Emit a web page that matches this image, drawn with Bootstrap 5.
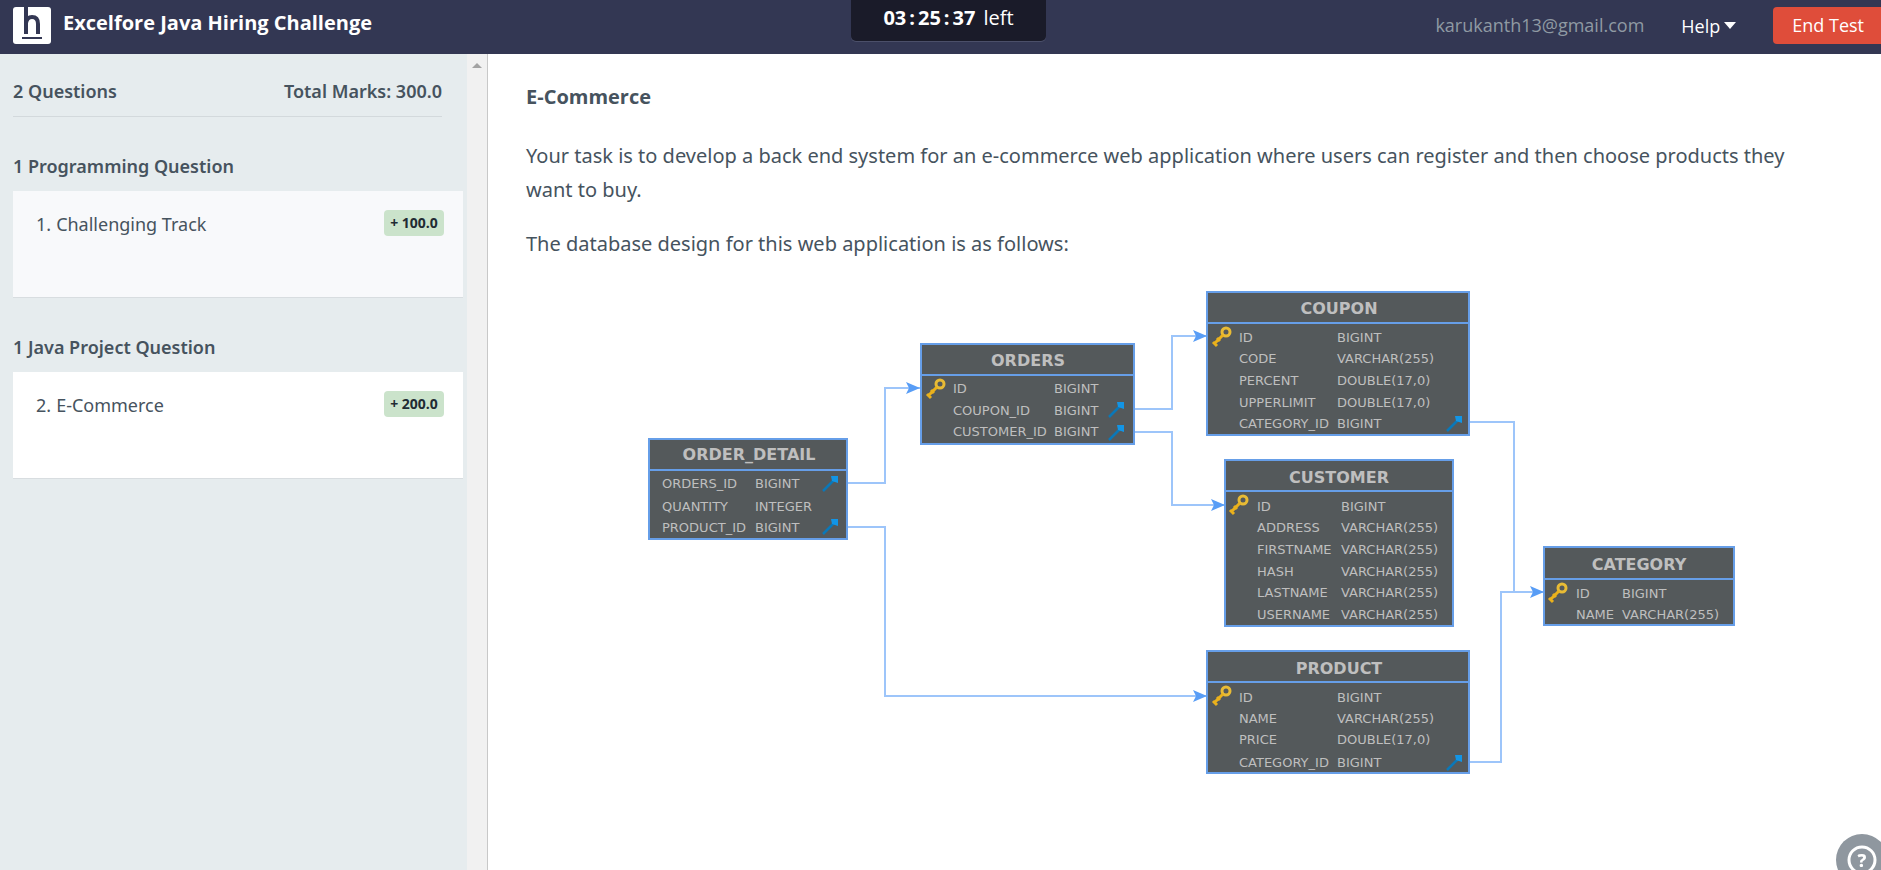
<!DOCTYPE html>
<html lang="en">
<head>
<meta charset="utf-8">
<meta name="viewport" content="width=device-width, initial-scale=1">
<title>Excelfore Java Hiring Challenge</title>
<link href="https://cdn.jsdelivr.net/npm/bootstrap@5.3.0/dist/css/bootstrap.min.css" rel="stylesheet">
<style>
  body { font-family: "Noto Sans", "Open Sans", sans-serif; color: #46535e; font-size: 18px; }
  .topbar { background: #333753; height: 54px; padding: 7px 0 0 13px; font-family: "Open Sans", sans-serif; }
  .brand-title { font-size: 20px; line-height: 32px; font-weight: 700; }
  .timer { background: #1a1b29; color: #fff; top: 0; left: 851px; width: 195px; height: 41px; line-height: 36px; font-size: 20px; border-radius: 0 0 5px 5px; box-shadow: 0 1px 0 #4b4f69; }
  .timer time { font-weight: 700; }
  .timer-sep { margin: 0 3px; }
  .mail { color: #8f9aa3; margin-right: 37px; line-height: 36px; }
  .help-link { color: #fff; font-size: 18px; line-height: 36px; font-weight: 400; margin-right: 37px; }
  .end-btn { background: #df4d3a; color: #fff; font-size: 18px; line-height: 37px; padding: 0 17px 0 19px; border: 0; border-radius: 4px 0 0 4px; }
  .side { width: 488px; background: #e6ecee; border-right: 1px solid #c8c8c8; }
  .side-body { padding: 24px 4px 0 13px; }
  .side-head { margin-right: 21px; padding-bottom: 11px; line-height: 27px; border-bottom: 1px solid #d3d9dc; font-weight: 600; }
  .group-title { font-size: 18px; line-height: 27px; font-weight: 600; margin: 36px 0 11px; }
  .q-item { height: 107px; padding: 19px 19px 0 23px; background: #fff; border-bottom: 1px solid #d8dde0; color: inherit; line-height: 29px; text-decoration: none; }
  .q-item.seen { background: #f8f9fb; }
  .q-no { margin-right: 5px; }
  .marks { background: #cbe3cb; color: #222b33; font-size: 14px; line-height: 26px; font-weight: 700; width: 60px; border-radius: 4px; font-family: "Open Sans", sans-serif; }
  .track { width: 20px; background: #f1f1f1; padding-top: 9px; }
  .problem { padding: 28px 24px 24px 38px; }
  .problem h1 { font-size: 20px; line-height: 30px; font-weight: 700; margin-bottom: 27px; font-family: "Open Sans", sans-serif; }
  .problem p { font-size: 20px; line-height: 34px; margin-bottom: 20px; padding-right: 44px; }
  .schema { max-width: 100%; height: auto; margin-top: 29px; }
  .schema text { font-family: "DejaVu Sans", sans-serif; font-size: 13px; fill: #bfbfbf; }
  .schema .t-name { font-weight: 700; font-size: 16px; text-anchor: middle; }
  .chat { right: -7px; bottom: -16px; width: 52px; height: 52px; }
</style>
</head>
<body class="vh-100 overflow-hidden d-flex flex-column">
<header class="topbar d-flex align-items-start position-relative flex-shrink-0">
  <svg width="38" height="37" viewBox="0 0 38 37" aria-label="HackerEarth" role="img">
    <rect width="38" height="37" rx="3" fill="#fff"/>
    <path d="M13 0V27M13 16Q14 10 19 10Q25 10 25 17V27" fill="none" stroke="#333753" stroke-width="4"/>
    <path d="M9 31H29" stroke="#333753" stroke-width="2"/>
  </svg>
  <span class="brand-title text-white ms-2 ps-1">Excelfore Java Hiring Challenge</span>
  <div class="timer position-absolute d-flex justify-content-center"><time>03<span class="timer-sep">:</span>25<span class="timer-sep">:</span>37</time><span class="ms-2">left</span></div>
  <div class="ms-auto d-flex">
    <span class="mail">karukanth13@gmail.com</span>
    <button class="help-link btn p-0 border-0 d-flex align-items-center">Help<svg class="ms-1" width="12" height="7" viewBox="0 0 12 7"><path d="M0 0H12L6 7Z" fill="#fff"/></svg></button>
    <button class="end-btn">End Test</button>
  </div>
</header>
<div class="d-flex flex-grow-1 overflow-hidden">
  <aside class="side d-flex flex-shrink-0">
    <div class="side-body flex-grow-1">
      <div class="side-head d-flex justify-content-between"><span>2 Questions</span><span>Total Marks: 300.0</span></div>
      <h2 class="group-title">1 Programming Question</h2>
      <a class="q-item seen d-flex align-items-start" href="#q1"><span class="q-no">1.</span><span>Challenging Track</span><span class="marks ms-auto text-center">+ 100.0</span></a>
      <h2 class="group-title">1 Java Project Question</h2>
      <a class="q-item d-flex align-items-start" href="#q2"><span class="q-no">2.</span><span>E-Commerce</span><span class="marks ms-auto text-center">+ 200.0</span></a>
    </div>
    <div class="track text-center d-flex justify-content-center"><svg width="10" height="5" viewBox="0 0 10 5"><path d="M0 5L5 0L10 5Z" fill="#a3a3a3"/></svg></div>
  </aside>
  <main class="problem flex-grow-1">
    <h1>E-Commerce</h1>
    <p>Your task is to develop a back end system for an e-commerce web application where users can register and then choose products they want to buy.</p>
    <p>The database design for this web application is as follows:</p>
    <svg class="schema d-block mx-auto" width="1088" height="486" viewBox="647 290 1088 486" role="img" aria-label="Database design">
      <defs>
        <g id="key"><circle cx="14" cy="5" r="4" fill="none" stroke="#e8bb35" stroke-width="3"/><path d="M11 8L3 16M1 15L5 19M5 11L8 14" stroke="#eab11c" stroke-width="3" fill="none"/></g>
        <g id="fk"><path d="M1 16L12 5" stroke="#0b78b8" stroke-width="2.5"/><path d="M9 1H16V8L10 6Z" fill="#1295e6"/></g>
        <path id="tip" d="M-14 -6L0 0L-14 6L-11 0Z" fill="#589df6"/>
      </defs>
      <g fill="none" stroke="#9dc5fa" stroke-width="2">
        <path d="M847 483H884V388H919"/><path d="M847 527H884V696H1206"/>
        <path d="M1133 409H1171V336H1206"/><path d="M1133 432H1171V505H1224"/>
        <path d="M1469 422H1513V592H1543"/><path d="M1469 762H1500V592H1543"/>
      </g>
      <use href="#tip" x="919" y="388"/><use href="#tip" x="1206" y="696"/><use href="#tip" x="1206" y="336"/><use href="#tip" x="1224" y="505"/><use href="#tip" x="1543" y="592"/>
      <g fill="#54595b" stroke="#669ee8" stroke-width="2">
        <path d="M648 439H846V539H648ZM648 470H846"/>
        <path d="M920 344H1133V444H920ZM920 375H1133"/>
        <path d="M1206 292H1468V435H1206ZM1206 323H1468"/>
        <path d="M1224 460H1452V626H1224ZM1224 491H1452"/>
        <path d="M1543 547H1733V625H1543ZM1543 579H1733"/>
        <path d="M1206 651H1468V773H1206ZM1206 682H1468"/>
      </g>
      <text class="t-name" x="748" y="460">ORDER_DETAIL</text>
      <text x="661" y="488">ORDERS_ID</text><text x="754" y="488">BIGINT</text>
      <text x="661" y="511">QUANTITY</text><text x="754" y="511">INTEGER</text>
      <text x="661" y="532">PRODUCT_ID</text><text x="754" y="532">BIGINT</text>
      <use href="#fk" x="821" y="475"/><use href="#fk" x="821" y="518"/>

      <text class="t-name" x="1027" y="366">ORDERS</text>
      <text x="952" y="393">ID</text><text x="1053" y="393">BIGINT</text>
      <text x="952" y="415">COUPON_ID</text><text x="1053" y="415">BIGINT</text>
      <text x="952" y="436">CUSTOMER_ID</text><text x="1053" y="436">BIGINT</text>
      <use href="#key" x="925" y="379"/><use href="#fk" x="1107" y="401"/><use href="#fk" x="1107" y="424"/>

      <text class="t-name" x="1338" y="314">COUPON</text>
      <text x="1238" y="342">ID</text><text x="1336" y="342">BIGINT</text>
      <text x="1238" y="363">CODE</text><text x="1336" y="363">VARCHAR(255)</text>
      <text x="1238" y="385">PERCENT</text><text x="1336" y="385">DOUBLE(17,0)</text>
      <text x="1238" y="407">UPPERLIMIT</text><text x="1336" y="407">DOUBLE(17,0)</text>
      <text x="1238" y="428">CATEGORY_ID</text><text x="1336" y="428">BIGINT</text>
      <use href="#key" x="1211" y="327"/><use href="#fk" x="1445" y="415"/>

      <text class="t-name" x="1338" y="483">CUSTOMER</text>
      <text x="1256" y="511">ID</text><text x="1340" y="511">BIGINT</text>
      <text x="1256" y="532">ADDRESS</text><text x="1340" y="532">VARCHAR(255)</text>
      <text x="1256" y="554">FIRSTNAME</text><text x="1340" y="554">VARCHAR(255)</text>
      <text x="1256" y="576">HASH</text><text x="1340" y="576">VARCHAR(255)</text>
      <text x="1256" y="597">LASTNAME</text><text x="1340" y="597">VARCHAR(255)</text>
      <text x="1256" y="619">USERNAME</text><text x="1340" y="619">VARCHAR(255)</text>
      <use href="#key" x="1228" y="495"/>

      <text class="t-name" x="1638" y="570">CATEGORY</text>
      <text x="1575" y="598">ID</text><text x="1621" y="598">BIGINT</text>
      <text x="1575" y="619">NAME</text><text x="1621" y="619">VARCHAR(255)</text>
      <use href="#key" x="1547" y="583"/>

      <text class="t-name" x="1338" y="674">PRODUCT</text>
      <text x="1238" y="702">ID</text><text x="1336" y="702">BIGINT</text>
      <text x="1238" y="723">NAME</text><text x="1336" y="723">VARCHAR(255)</text>
      <text x="1238" y="744">PRICE</text><text x="1336" y="744">DOUBLE(17,0)</text>
      <text x="1238" y="767">CATEGORY_ID</text><text x="1336" y="767">BIGINT</text>
      <use href="#key" x="1211" y="686"/><use href="#fk" x="1445" y="754"/>
    </svg>
  </main>
</div>
<button class="chat btn p-0 border-0 position-fixed" aria-label="Support">
  <svg class="d-block" width="52" height="52" viewBox="0 0 52 52"><circle cx="26" cy="26" r="26" fill="#8f979f"/><circle cx="26" cy="26" r="13" fill="none" stroke="#fff" stroke-width="3"/><text x="26" y="33" text-anchor="middle" font-size="18" font-weight="800" fill="#fff">?</text></svg>
</button>
<script src="https://cdn.jsdelivr.net/npm/bootstrap@5.3.0/dist/js/bootstrap.bundle.min.js"></script>
</body>
</html>
